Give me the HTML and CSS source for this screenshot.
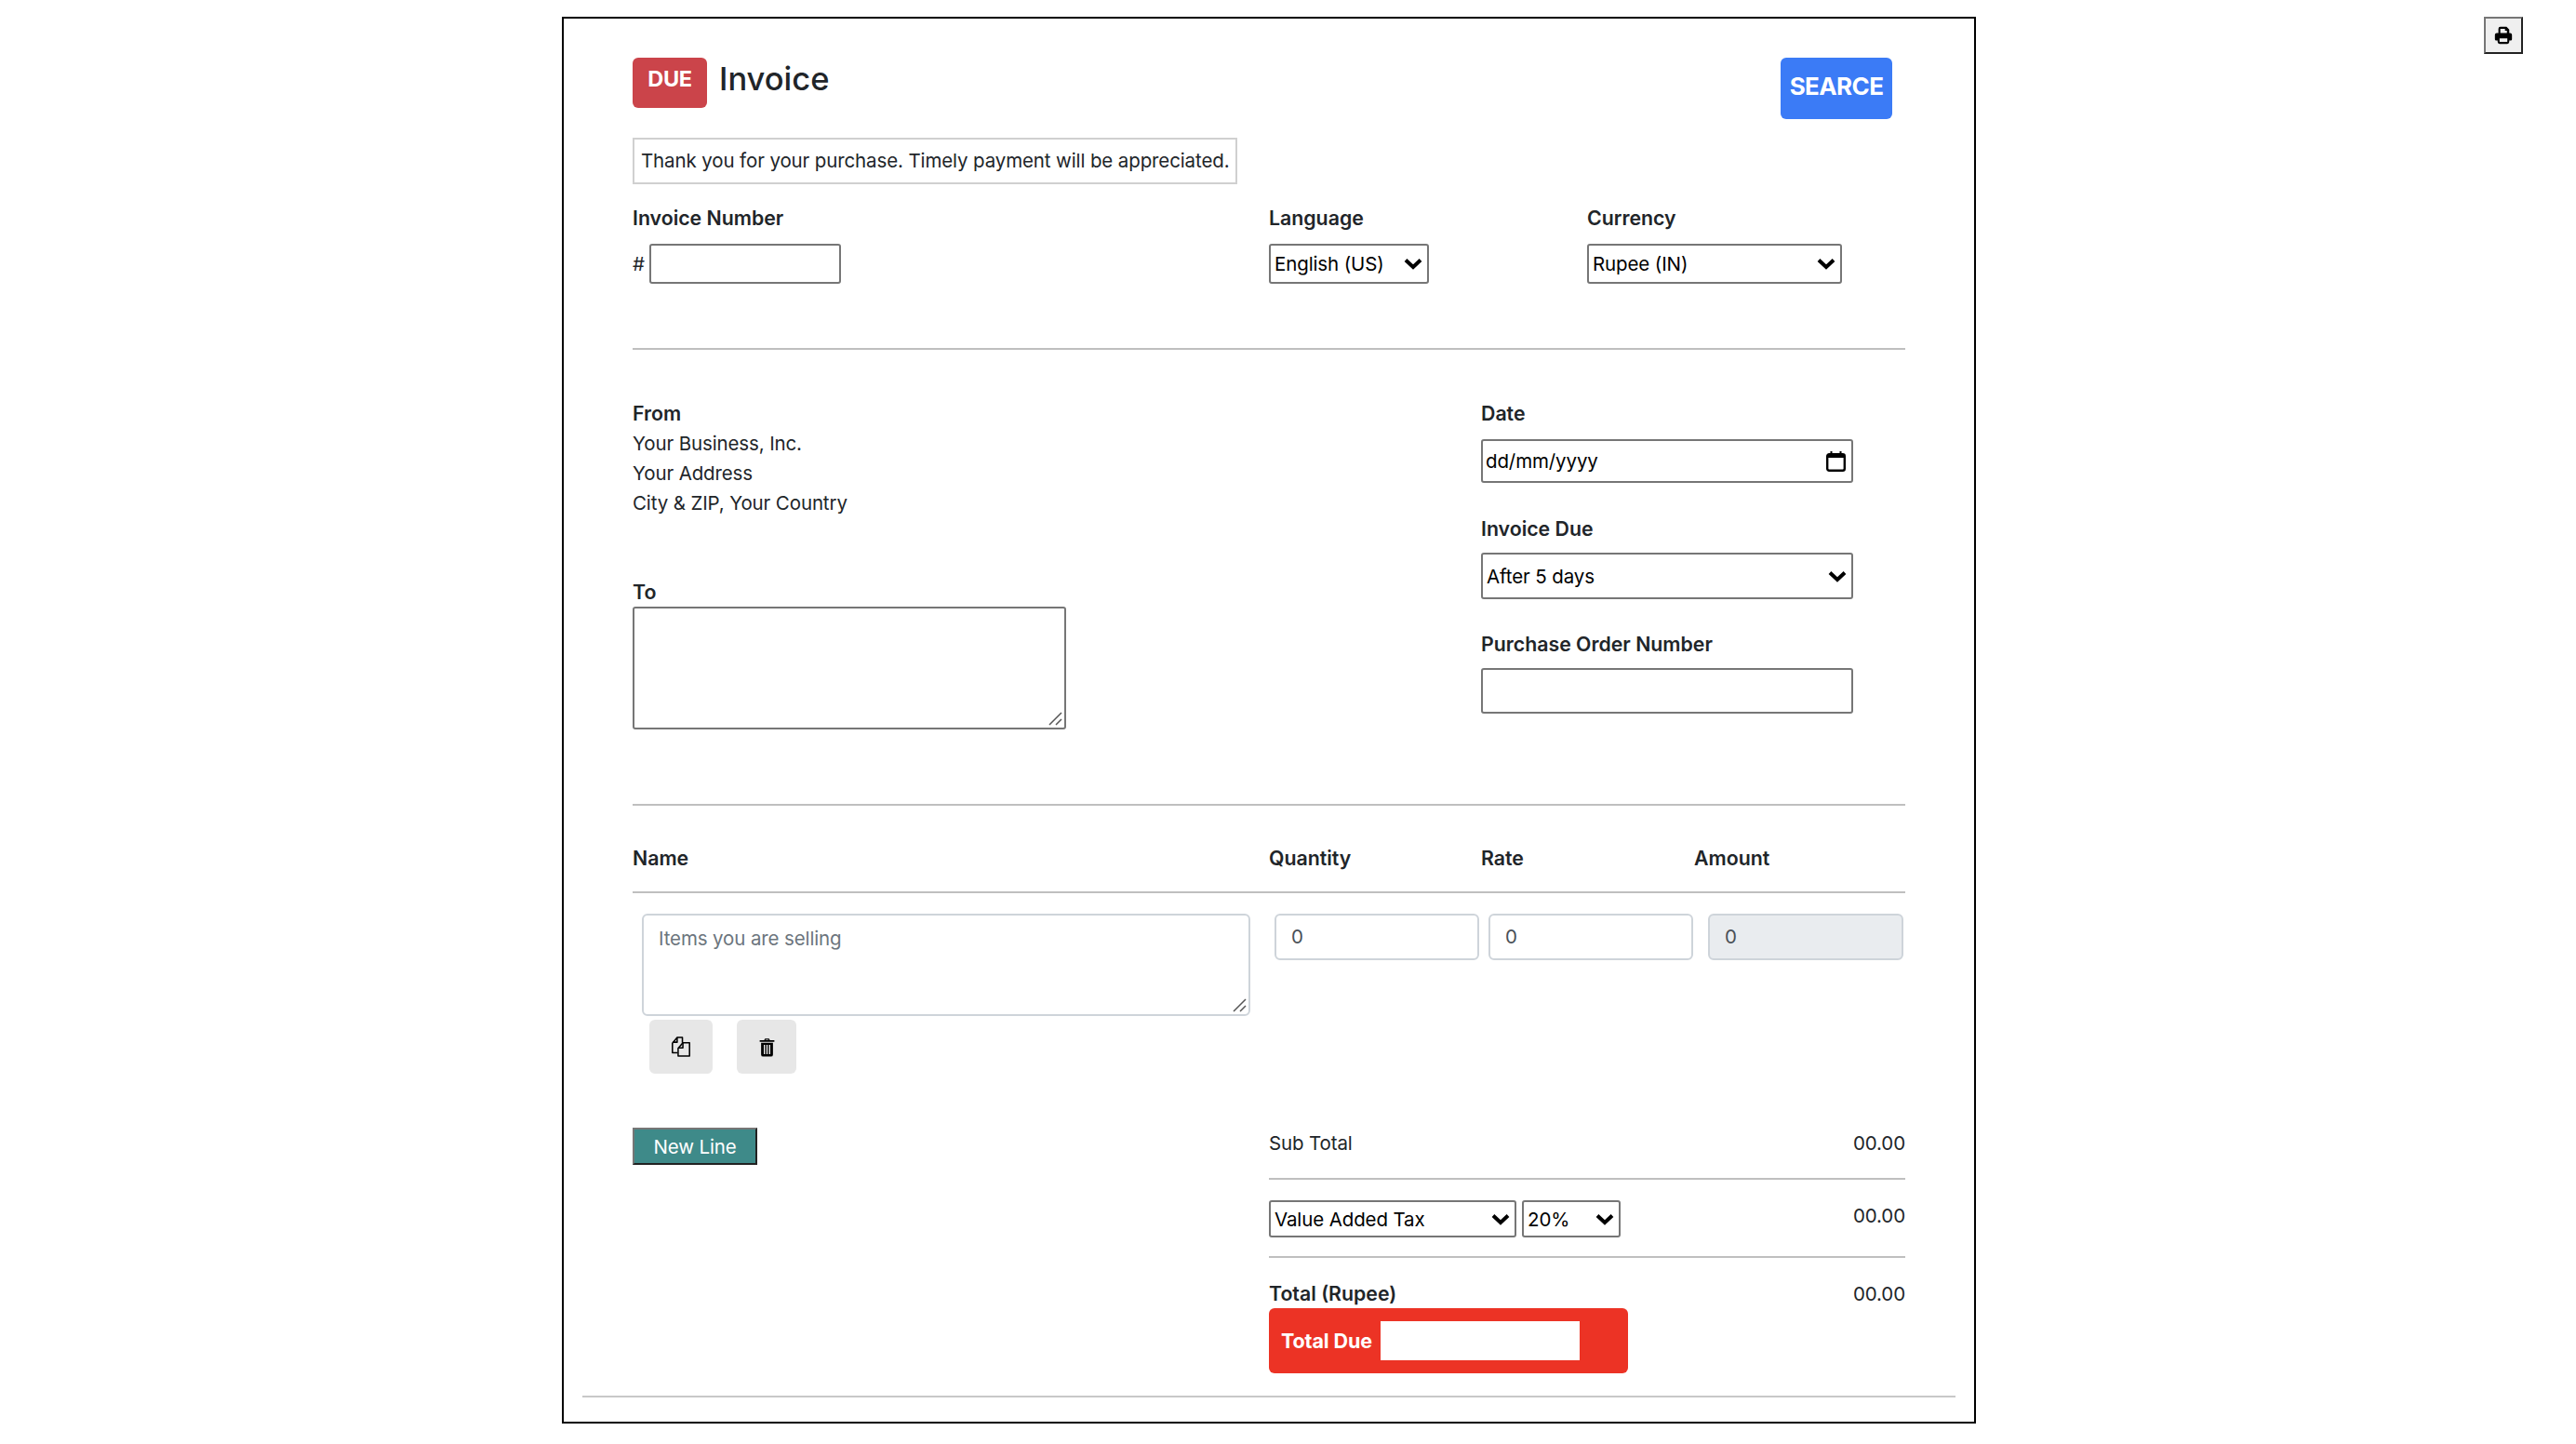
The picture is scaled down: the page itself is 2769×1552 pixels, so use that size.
FILE: index.html
```html
<!DOCTYPE html>
<html lang="en">
<head>
<meta charset="utf-8">
<title>Invoice</title>
<link rel="stylesheet" href="styles.css">
</head>
<body>
<main class="invoice">
  <header class="top">
    <div class="title">
      <span class="badge">DUE</span>
      <h1>Invoice</h1>
    </div>
    <button class="search" type="button"><span>SEARCE</span></button>
  </header>
  <p class="note">Thank you for your purchase. Timely payment will be appreciated.</p>
  <section class="meta">
    <div>
      <label class="label">Invoice Number</label>
      <div class="number"><span>#</span><input class="field number-input" type="text"></div>
    </div>
    <div>
      <label class="label">Language</label>
      <select class="field language"><option>English (US)</option></select>
    </div>
    <div>
      <label class="label">Currency</label>
      <select class="field currency"><option>Rupee (IN)</option></select>
    </div>
  </section>
  <hr class="rule rule-one">
  <section class="parties">
    <div class="left">
      <strong class="label from">From</strong>
      <p>Your Business, Inc.</p>
      <p>Your Address</p>
      <p>City &amp; ZIP, Your Country</p>
      <label class="label to">To</label>
      <textarea class="field to-area"></textarea>
    </div>
    <div class="right">
      <label class="label date-label">Date</label>
      <input class="field date" type="text" value="dd/mm/yyyy">
      <label class="label">Invoice Due</label>
      <select class="field due"><option>After 5 days</option></select>
      <label class="label">Purchase Order Number</label>
      <input class="field po" type="text">
    </div>
  </section>
  <hr class="rule">
  <div class="items-head">
    <b>Name</b><b>Quantity</b><b>Rate</b><b>Amount</b>
  </div>
  <hr class="rule">
  <section class="item">
    <div class="item-name">
      <textarea class="soft area" placeholder="Items you are selling"></textarea>
      <div class="actions">
        <button class="icon-btn copy" type="button" aria-label="Copy">
          <svg viewBox="1.500 1.500 20 21.500" width="22" height="22" fill="none" stroke="#000" stroke-width="1.500" stroke-linejoin="round"><path d="M8 18.500H2.500V8.500L7.500 2.500H13V8"/><path d="M7.500 2.500V7.500H3"/><path d="M8.500 14L13.500 8H20.500V22H8.500Z" fill="#e7e7e7"/><path d="M13.500 8V13.500H8.500"/></svg>
        </button>
        <button class="icon-btn trash" type="button" aria-label="Delete">
          <svg viewBox="0 0 24 24" width="24" height="24"><path fill="#000" d="M8.500 3.500 9.500 1.500h5l1 2H21v2H3v-2zM10.400 2.900l-.3.6h3.800l-.3-.6z"/><path fill="#000" d="M4.700 6.500h14.600V21a2.500 2.500 0 0 1-2.500 2.500H7.200A2.500 2.500 0 0 1 4.700 21z"/><path fill="#e7e7e7" d="M8 9h1.600v11.500H8zM11.200 9h1.600v11.500h-1.600zM14.400 9H16v11.500h-1.600z"/></svg>
        </button>
      </div>
    </div>
    <input class="soft num" type="text" value="0">
    <input class="soft num" type="text" value="0">
    <input class="soft num amount" type="text" value="0" disabled>
  </section>
  <section class="bottom">
    <button class="new-line" type="button">New Line</button>
    <div class="totals">
      <div class="row sub"><span>Sub Total</span><span>00.00</span></div>
      <hr class="rule">
      <div class="row tax">
        <div class="tax-selects">
          <select class="field vat"><option>Value Added Tax</option></select>
          <select class="field pct"><option>20%</option></select>
        </div>
        <span class="tax-value">00.00</span>
      </div>
      <hr class="rule">
      <div class="row total"><b>Total (Rupee)</b><span>00.00</span></div>
      <div class="due-box"><b>Total Due</b><input class="due-input" type="text"></div>
    </div>
  </section>
  <hr class="end-rule">
</main>
<button class="print" type="button" aria-label="Print">
  <svg viewBox="0 0 24 24" width="24" height="24"><path fill="#000" fill-rule="evenodd" d="M5.500 9V3.500A2.500 2.500 0 0 1 8 1h8l3.500 3.500V9h1A2.500 2.500 0 0 1 23 11.500V17a1.500 1.500 0 0 1-1.500 1.500H19.500v2A2.500 2.500 0 0 1 17 23H7a2.500 2.500 0 0 1-2.500-2.500v-2H2.500A1.500 1.500 0 0 1 1 17v-5.500A2.500 2.500 0 0 1 3.500 9zM8 3.500V9h8.500V6h-2.500V3.500zM7 16v4.500h10V16z"/></svg>
</button>
</body>
</html>
```
FILE: styles.css
```css
* { box-sizing: border-box; }
html, body { margin: 0; background: #fff; }
body {
  display: flex;
  align-items: flex-start;
  gap: 546px;
  padding: 18px 57px 22px 604px;
  font-family: "Inter", "Liberation Sans", sans-serif;
  font-size: 20.5px;
  letter-spacing: -0.12px;
  line-height: 32px;
  color: #212529;
}
.invoice {
  position: relative;
  flex: none;
  width: 1520px;
  height: 1512px;
  border: 2px solid #000;
  padding: 42px 74px 0;
}
.top { display: flex; justify-content: space-between; height: 86px; padding-right: 14px; }
.title { display: flex; align-items: flex-start; gap: 13px; }
.badge {
  width: 80px; height: 54px;
  background: #cb444a; color: #fff; border-radius: 6px;
  display: flex; align-items: center; justify-content: center;
  padding-bottom: 8px;
  font-weight: 700; font-size: 23.5px; letter-spacing: -0.3px; line-height: 1;
}
h1 { margin: 0; font-size: 34.5px; letter-spacing: 0; line-height: 46px; font-weight: 500; }
.search {
  width: 120px; height: 66px; padding: 0 0 4px; overflow: hidden;
  background: #3b7bf6; color: #fff; border: 0; border-radius: 6px;
  font: 700 26px/1 "Inter", sans-serif;
  letter-spacing: -0.6px;
  display: flex; align-items: center; justify-content: center;
}
.note {
  width: 650px; height: 50px; margin: 0;
  border: 2px solid #d0d0d0; padding: 7px 0 0 7px;
  white-space: nowrap;
}
.label, .items-head b, .total b { font-weight: 600; font-size: 21.3px; letter-spacing: 0; line-height: 30px; }
.label { display: block; }
.meta { display: grid; grid-template-columns: 684px 342px 1fr; margin-top: 21px; }
.meta .label { height: 43px; }
.number { display: flex; align-items: center; gap: 5px; }
.field {
  border: 2px solid #767676; border-radius: 3px; background-color: #fff; color: #000;
  font: 20.5px/1.2 "Inter", sans-serif; letter-spacing: -0.12px; padding: 0 3px; margin: 0; outline: 0;
  display: block;
}
select.field {
  appearance: none; -webkit-appearance: none;
  padding: 2px 3px 0 4px;
  background-image: url("data:image/svg+xml,%3Csvg xmlns='http://www.w3.org/2000/svg' viewBox='0 0 20 13'%3E%3Cpath d='M2 2.500 10 10 18 2.500' fill='none' stroke='%23000' stroke-width='4'/%3E%3C/svg%3E");
  background-repeat: no-repeat;
  background-size: 20px 13px;
  background-position: right 5px center;
}
.number-input { width: 206px; height: 43px; }
.language { width: 172px; height: 43px; }
.currency { width: 274px; height: 43px; }
.rule { border: 0; height: 2px; margin: 0; background: #bfbfbf; }
.rule-one { margin-top: 69px; }
.parties { display: grid; grid-template-columns: 912px 1fr; margin-top: 53px; height: 435px; }
.parties p { margin: 0; }
.from { height: 32px; }
.to { margin-top: 64px; height: 31px; }
.to-area, .area {
  resize: none;
  background-image: url("data:image/svg+xml,%3Csvg xmlns='http://www.w3.org/2000/svg' viewBox='0 0 16 16'%3E%3Cpath d='M2 15 15 2M9 15 15 9' stroke='%23555' stroke-width='1.500' fill='none'/%3E%3C/svg%3E");
  background-repeat: no-repeat;
  background-size: 16px 16px;
  background-position: right 2px bottom 2px;
}
.to-area { width: 466px; height: 132px; }
.right { width: 400px; }
.right .label { height: 41px; }
.right .date-label { height: 43px; }
.date {
  width: 400px; height: 47px; margin-bottom: 34px;
  background-image: url("data:image/svg+xml,%3Csvg xmlns='http://www.w3.org/2000/svg' viewBox='0 0 21 22'%3E%3Cpath d='M2 5.500H19' stroke='%23000' stroke-width='3'/%3E%3Crect x='1.200' y='3.200' width='18.600' height='17.600' rx='2' fill='none' stroke='%23000' stroke-width='2.400'/%3E%3Cpath d='M5.500 0V4M15.500 0V4' stroke='%23000' stroke-width='2'/%3E%3C/svg%3E");
  background-repeat: no-repeat;
  background-size: 21px 22px;
  background-position: right 6px center;
}
.due { width: 400px; height: 50px; margin-bottom: 33px; }
.po { width: 400px; height: 49px; }
.items-head {
  display: grid; grid-template-columns: 684px 228px 229px 1fr;
  padding-top: 41px; height: 92px;
}
.item {
  display: grid;
  grid-template-columns: 680px 230px 236px 1fr;
  padding: 22px 0 0 10px;
  height: 240px;
  align-items: start;
}
.soft {
  border: 2px solid #ced4da; border-radius: 6px; background-color: #fff; color: #495057;
  font: 20.5px/32px "Inter", sans-serif; letter-spacing: -0.12px; outline: 0; margin: 0; display: block;
}
.soft::placeholder { color: #6c757d; opacity: 1; }
.area { width: 654px; height: 110px; padding: 9px 16px; }
.num { width: 220px; height: 50px; padding: 0 16px 1px; }
.amount { width: 210px; background: #e9ecef; }
.actions { display: flex; gap: 26px; padding: 4px 0 0 8px; }
.icon-btn {
  height: 58px; border: 0; border-radius: 6px; background: #e7e7e7; padding: 0;
  display: flex; align-items: center; justify-content: center;
}
.copy { width: 68px; }
.trash { width: 64px; }
.trash svg { width: 21px; height: 21px; }
.bottom { display: grid; grid-template-columns: 684px 1fr; align-items: start; }
.new-line {
  width: 134px; height: 40px; padding: 2px 0 0;
  background: #3e8a89; color: #fff;
  border: 2px solid; border-color: #767676 #222 #222 #767676;
  font: 20.5px/1 "Inter", sans-serif;
  letter-spacing: -0.12px;
  margin-top: 12px;
}
.row { display: flex; justify-content: space-between; }
.sub { height: 66px; padding-top: 13px; }
.tax { height: 82px; padding-top: 22px; }
.tax-value { margin-top: 1px; }
.tax-selects { display: flex; gap: 6px; height: 40px; }
.vat { width: 266px; height: 40px; }
.pct { width: 106px; height: 40px; }
.total { height: 53px; padding-top: 23px; }
.due-box {
  width: 386px; height: 70px; margin-top: 1px; padding: 0 0 0 13px;
  background: #ec3325; border-radius: 6px; color: #fff;
  display: flex; align-items: center; gap: 9px;
}
.due-box b { font-weight: 700; font-size: 21.5px; white-space: nowrap; }
.due-input { width: 214px; height: 42px; border: 0; background: #fff; padding: 0; margin: 0; }
.end-rule {
  position: absolute; left: 20px; right: 20px; top: 1480px;
  border: 0; height: 2px; margin: 0; background: #c8c8c8;
}
.print {
  flex: none; width: 42px; height: 40px; padding: 0;
  background: #efefef;
  border: 2px solid; border-color: #767676 #222 #222 #767676;
  display: flex; align-items: center; justify-content: center;
}
.print svg { width: 20px; height: 20px; }
```
